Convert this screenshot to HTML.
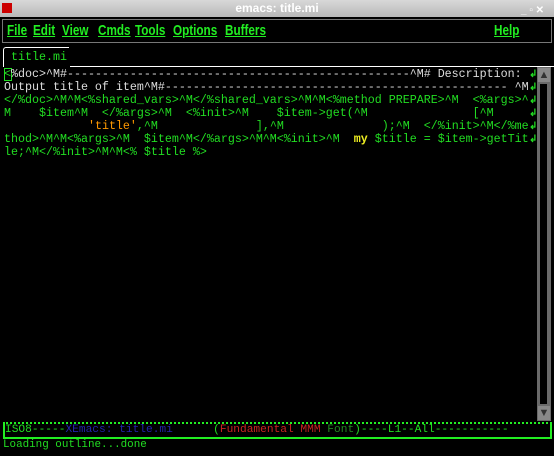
<!DOCTYPE html>
<html><head><style>
body{margin:0;width:554px;height:456px;background:#000;overflow:hidden;position:relative;font-family:"Liberation Sans",sans-serif}
.tb{position:absolute;left:0;top:0;width:554px;height:17px;background:linear-gradient(#d8d8d8,#b8b8b8);color:#fff;font-weight:bold;font-size:12px;text-align:center;line-height:17px}
.menu{position:absolute;left:2px;top:19px;width:548px;height:22px;border:1px solid #777;background:#000;color:#2e2;font-weight:bold;font-size:15px;line-height:22px}
.menu span{position:absolute;text-decoration:underline;text-decoration-thickness:1px;transform:scaleX(0.78);transform-origin:left}
.m{position:absolute;font-family:"Liberation Mono",monospace;font-size:11.67px;line-height:13px;white-space:pre;color:#2d2}
.w{color:#ddd}
.g{color:#2d2}
.arr{position:absolute;left:529px;width:7px;height:10px;color:#2d2;font-size:10px;font-weight:bold;line-height:10px}
</style></head><body>
<div class="tb">emacs: title.mi</div>
<div style="position:absolute;left:2px;top:3px;width:10px;height:10px;background:#c00"></div>
<div style="position:absolute;left:521px;top:5px;font-size:10px;color:#fff;font-weight:bold">_ ▫ ✕</div>
<div class="menu">
<span style="left:4px">File</span><span style="left:30px">Edit</span><span style="left:59px">View</span><span style="left:95px">Cmds</span><span style="left:132px">Tools</span><span style="left:170px">Options</span><span style="left:222px">Buffers</span><span style="left:491px">Help</span>
</div>
<div style="position:absolute;left:3px;top:47px;width:65px;height:19px;border-left:1px solid #fff;border-top:1px solid #fff;border-radius:3px 0 0 0"></div>
<div class="m" style="left:11px;top:51px;color:#2d2">title.mi</div>
<div style="position:absolute;left:70px;top:66px;width:484px;height:1px;background:#fff"></div>
<div style="position:absolute;left:4px;top:68px;width:6px;height:11px;border:1px solid #2d2"></div>
<div class="m" style="left:4px;top:68px"><span class="w"><span class="g">&lt;</span>%doc&gt;^M#-------------------------------------------------^M# Description: </span>
<span class="w">Output title of item^M#------------------------------------------------- ^M</span>
&lt;/%doc&gt;^M^M&lt;%shared_vars&gt;^M&lt;/%shared_vars&gt;^M^M&lt;%method PREPARE&gt;^M  &lt;%args&gt;^
M    $item^M  &lt;/%args&gt;^M  &lt;%init&gt;^M    $item-&gt;get(^M               [^M
            <span style="color:#f90">'title'</span>,^M              ],^M              );^M  &lt;/%init&gt;^M&lt;/%me
thod&gt;^M^M&lt;%args&gt;^M  $item^M&lt;/%args&gt;^M^M&lt;%init&gt;^M  <b style="color:#ee2">my</b> $title = $item-&gt;getTit
le;^M&lt;/%init&gt;^M^M&lt;% $title %&gt;</div>
<div class="arr" style="top:70px">↲</div><div class="arr" style="top:83px">↲</div><div class="arr" style="top:96px">↲</div><div class="arr" style="top:109px">↲</div><div class="arr" style="top:122px">↲</div><div class="arr" style="top:135px">↲</div>
<div style="position:absolute;left:537px;top:67px;width:14px;height:354px;background:#6a6a6a"></div>
<div style="position:absolute;left:540px;top:84px;width:7px;height:320px;background:#000"></div>
<div style="position:absolute;left:538px;top:68px;width:12px;height:14px;background:#888;color:#333;font-size:11px;text-align:center;line-height:14px">▲</div>
<div style="position:absolute;left:538px;top:406px;width:12px;height:14px;background:#888;color:#333;font-size:11px;text-align:center;line-height:14px">▼</div>
<div style="position:absolute;left:3px;top:422px;width:545px;height:13px;border:2px solid #2e2;border-top:2px dotted #2e2"></div>
<div class="m" style="left:5px;top:424px;font-size:11.2px">ISO8-----<span style="color:#22a">XEmacs: title.mi</span>      (<span style="color:#c22">Fundamental MMM</span> <span style="color:#282">Font</span>)----L1--All-----------</div>
<div class="m" style="left:3px;top:439px;font-size:10.9px">Loading outline...done</div>
</body></html>
